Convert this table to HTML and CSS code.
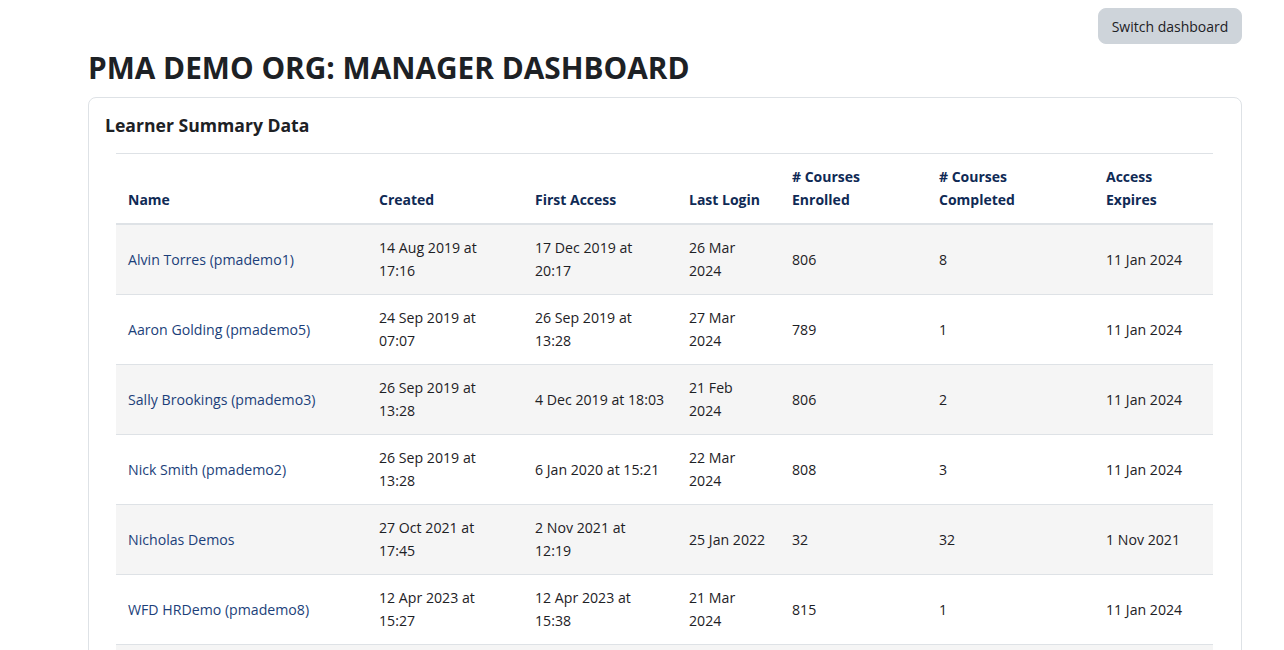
FILE: index.html
```html
<!DOCTYPE html>
<html lang="en">
<head>
<meta charset="utf-8">
<title>Manager Dashboard</title>
<link rel="stylesheet" href="styles.css">
</head>
<body>
<div class="page">
  <div class="actions">
    <button class="btn-secondary" type="button">Switch dashboard</button>
  </div>
  <h2 class="page-title">PMA DEMO ORG: MANAGER DASHBOARD</h2>
  <section class="card">
    <div class="card-body">
      <h5 class="card-title">Learner Summary Data</h5>
      <table class="summary">
        <colgroup>
          <col class="c-name"><col class="c-created"><col class="c-first"><col class="c-last"><col class="c-enrolled"><col class="c-completed"><col class="c-expires">
        </colgroup>
        <thead>
          <tr>
            <th>Name</th>
            <th>Created</th>
            <th>First Access</th>
            <th>Last Login</th>
            <th># Courses Enrolled</th>
            <th># Courses Completed</th>
            <th>Access Expires</th>
          </tr>
        </thead>
        <tbody>
          <tr>
            <td><a href="#">Alvin Torres (pmademo1)</a></td>
            <td>14 Aug 2019 at 17:16</td>
            <td>17 Dec 2019 at 20:17</td>
            <td>26 Mar 2024</td>
            <td>806</td>
            <td>8</td>
            <td>11 Jan 2024</td>
          </tr>
          <tr>
            <td><a href="#">Aaron Golding (pmademo5)</a></td>
            <td>24 Sep 2019 at 07:07</td>
            <td>26 Sep 2019 at 13:28</td>
            <td>27 Mar 2024</td>
            <td>789</td>
            <td>1</td>
            <td>11 Jan 2024</td>
          </tr>
          <tr>
            <td><a href="#">Sally Brookings (pmademo3)</a></td>
            <td>26 Sep 2019 at 13:28</td>
            <td>4 Dec 2019 at 18:03</td>
            <td>21 Feb 2024</td>
            <td>806</td>
            <td>2</td>
            <td>11 Jan 2024</td>
          </tr>
          <tr>
            <td><a href="#">Nick Smith (pmademo2)</a></td>
            <td>26 Sep 2019 at 13:28</td>
            <td>6 Jan 2020 at 15:21</td>
            <td>22 Mar 2024</td>
            <td>808</td>
            <td>3</td>
            <td>11 Jan 2024</td>
          </tr>
          <tr>
            <td><a href="#">Nicholas Demos</a></td>
            <td>27 Oct 2021 at 17:45</td>
            <td>2 Nov 2021 at 12:19</td>
            <td>25 Jan 2022</td>
            <td>32</td>
            <td>32</td>
            <td>1 Nov 2021</td>
          </tr>
          <tr>
            <td><a href="#">WFD HRDemo (pmademo8)</a></td>
            <td>12 Apr 2023 at 15:27</td>
            <td>12 Apr 2023 at 15:38</td>
            <td>21 Mar 2024</td>
            <td>815</td>
            <td>1</td>
            <td>11 Jan 2024</td>
          </tr>
          <tr>
            <td><a href="#">Jane Carter (pmademo4)</a></td>
            <td>12 Apr 2023 at 15:40</td>
            <td>13 Apr 2023 at 09:12</td>
            <td>20 Mar 2024</td>
            <td>790</td>
            <td>4</td>
            <td>11 Jan 2024</td>
          </tr>
        </tbody>
      </table>
    </div>
  </section>
</div>
</body>
</html>
```

FILE: styles.css
```css
* { box-sizing: border-box; }

html, body {
  margin: 0;
  padding: 0;
  background: #ffffff;
}

body {
  font-family: "Open Sans", "Noto Sans", "Liberation Sans", sans-serif;
  font-size: 14px;
  color: #1d2125;
  overflow: hidden;
}

.page {
  width: 1154px;
  margin-left: 88px;
  padding-top: 8px;
}

.actions {
  display: flex;
  justify-content: flex-end;
  height: 36px;
}

.btn-secondary {
  font-family: inherit;
  font-size: 14px;
  color: #1d2125;
  background: #ced4da;
  border: 1px solid #ced4da;
  border-radius: 8px;
  width: 144px;
  height: 36px;
  padding: 2px 0 0 0;
  line-height: 32px;
  cursor: pointer;
}

.page-title {
  margin: 5px 0 0 0;
  font-size: 29.8px;
  line-height: 37px;
  font-weight: 700;
  color: #1d2125;
}

.card {
  margin-top: 11px;
  border: 1px solid #dee2e6;
  border-radius: 8px;
  height: 600px;
}

.card-body {
  padding: 14px 16px 16px 16px;
}

.card-title {
  margin: 0;
  font-size: 17.6px;
  line-height: 26px;
  font-weight: 700;
  color: #1d2125;
}

.summary {
  margin: 15px 12px 0 11px;
  width: 1097px;
  border-collapse: collapse;
  table-layout: fixed;
}

.c-name { width: 251px; }
.c-created { width: 156px; }
.c-first { width: 154px; }
.c-last { width: 103px; }
.c-enrolled { width: 147px; }
.c-completed { width: 167px; }
.c-expires { width: 119px; }

.summary th,
.summary td {
  padding: 12px;
  text-align: left;
  font-size: 14.15px;
  line-height: 23px;
  border-top: 1px solid #dee2e6;
}

.summary th {
  vertical-align: bottom;
  color: #0f2a55;
  font-weight: 700;
  font-size: 14px;
  border-bottom: 2px solid #dee2e6;
  padding-top: 11px;
  padding-bottom: 12px;
}

.summary td {
  vertical-align: middle;
  color: #1d2125;
  height: 70px;
  padding-top: 11px;
  padding-bottom: 12px;
}

.summary tbody tr:nth-child(odd) td {
  background: #f5f5f5;
}

.summary tbody tr:first-child td { border-top: none; }

.summary a {
  color: #1c3f7a;
  text-decoration: none;
}
```
